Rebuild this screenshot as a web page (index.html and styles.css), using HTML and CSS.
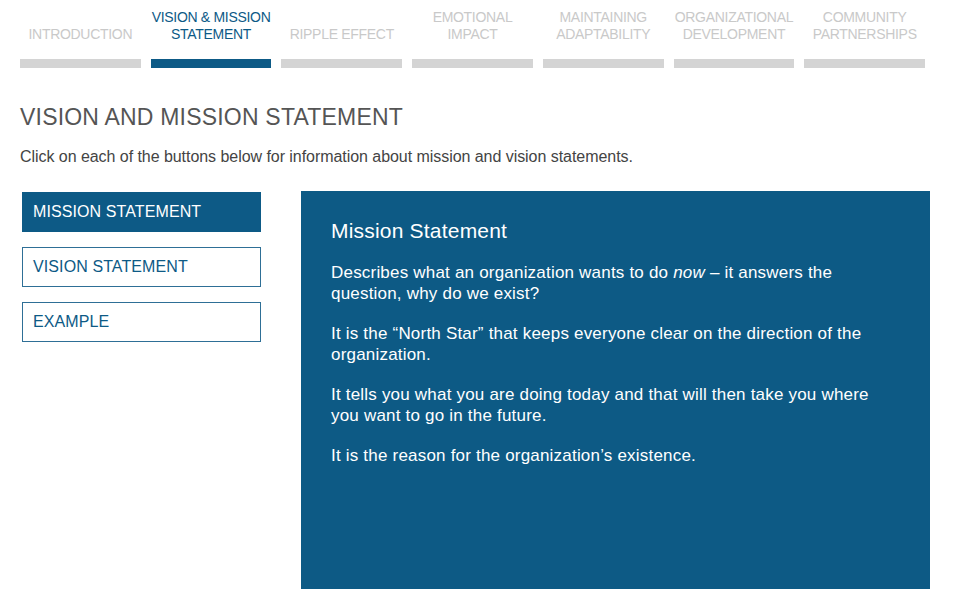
FILE: index.html
```html
<!DOCTYPE html>
<html>
<head>
<meta charset="utf-8" />
<title>Vision and Mission Statement</title>
<link rel="stylesheet" href="styles.css">
</head>
<body>
<nav class="tabs">
  <div class="tab">
    <span class="tab-label">INTRODUCTION</span>
    <span class="tab-bar"></span>
  </div>
  <div class="tab active">
    <span class="tab-label">VISION &amp; MISSION<br>STATEMENT</span>
    <span class="tab-bar"></span>
  </div>
  <div class="tab">
    <span class="tab-label">RIPPLE EFFECT</span>
    <span class="tab-bar"></span>
  </div>
  <div class="tab">
    <span class="tab-label">EMOTIONAL<br>IMPACT</span>
    <span class="tab-bar"></span>
  </div>
  <div class="tab">
    <span class="tab-label">MAINTAINING<br>ADAPTABILITY</span>
    <span class="tab-bar"></span>
  </div>
  <div class="tab">
    <span class="tab-label">ORGANIZATIONAL<br>DEVELOPMENT</span>
    <span class="tab-bar"></span>
  </div>
  <div class="tab">
    <span class="tab-label">COMMUNITY<br>PARTNERSHIPS</span>
    <span class="tab-bar"></span>
  </div>
</nav>

<h1 class="title">VISION AND MISSION STATEMENT</h1>
<p class="intro">Click on each of the buttons below for information about mission and vision statements.</p>

<div class="content">
  <div class="buttons">
    <div class="btn selected">MISSION STATEMENT</div>
    <div class="btn">VISION STATEMENT</div>
    <div class="btn">EXAMPLE</div>
  </div>
  <div class="panel">
    <h2>Mission Statement</h2>
    <p>Describes what an organization wants to do <em>now</em> – it answers the question, why do we exist?</p>
    <p>It is the “North Star” that keeps everyone clear on the direction of the organization.</p>
    <p>It tells you what you are doing today and that will then take you where you want to go in the future.</p>
    <p>It is the reason for the organization’s existence.</p>
  </div>
</div>
</body>
</html>
```

FILE: styles.css
```css
body {
  margin: 0;
  padding: 0 44px 0 20px;
  font-family: "Liberation Sans", Arial, sans-serif;
  background: #fff;
}
.tabs {
  display: flex;
  gap: 10px;
  padding-top: 9px;
  margin-right: 5px;
}
.tab {
  flex: 1;
  display: flex;
  flex-direction: column;
  align-items: center;
}
.tab-label {
  height: 34px;
  margin-bottom: 16px;
  display: flex;
  align-items: flex-end;
  text-align: center;
  justify-content: center;
  font-size: 14px;
  line-height: 17px;
  letter-spacing: -0.3px;
  color: #c9c9c9;
}
.tab-bar {
  display: block;
  width: 100%;
  height: 9px;
  background: #d4d4d4;
}
.tab.active .tab-label {
  color: #0d5a86;
}
.tab.active .tab-bar {
  background: #0d5a86;
}
.title {
  margin: 36px 0 0 0;
  font-size: 23px;
  font-weight: normal;
  color: #555;
  line-height: 26px;
  letter-spacing: 0.2px;
}
.intro {
  margin: 17px 0 0 0;
  font-size: 16px;
  color: #444;
  letter-spacing: -0.05px;
  line-height: 20px;
}
.content {
  display: flex;
  margin-top: 24px;
}
.buttons {
  width: 239px;
  flex-shrink: 0;
  margin: 1px 0 0 2px;
  display: flex;
  flex-direction: column;
  gap: 15px;
}
.btn {
  box-sizing: border-box;
  height: 40px;
  border: 1px solid #2e6f96;
  padding: 0 10px;
  display: flex;
  align-items: center;
  font-size: 16px;
  letter-spacing: 0.1px;
  color: #0d5a86;
}
.btn.selected {
  background: #0d5a86;
  color: #fff;
  border-color: #0d5a86;
}
.panel {
  flex-shrink: 0;
  margin-left: 40px;
  width: 629px;
  height: 398px;
  box-sizing: border-box;
  padding: 27px 48px 0 30px;
  background: #0d5a85;
  color: #fff;
}
.panel h2 {
  margin: 0 0 18px 0;
  font-size: 21px;
  font-weight: normal;
  line-height: 26px;
  letter-spacing: 0.2px;
}
.panel p {
  margin: 0 0 19px 0;
  font-size: 17px;
  line-height: 21px;
  letter-spacing: 0.2px;
}
```
